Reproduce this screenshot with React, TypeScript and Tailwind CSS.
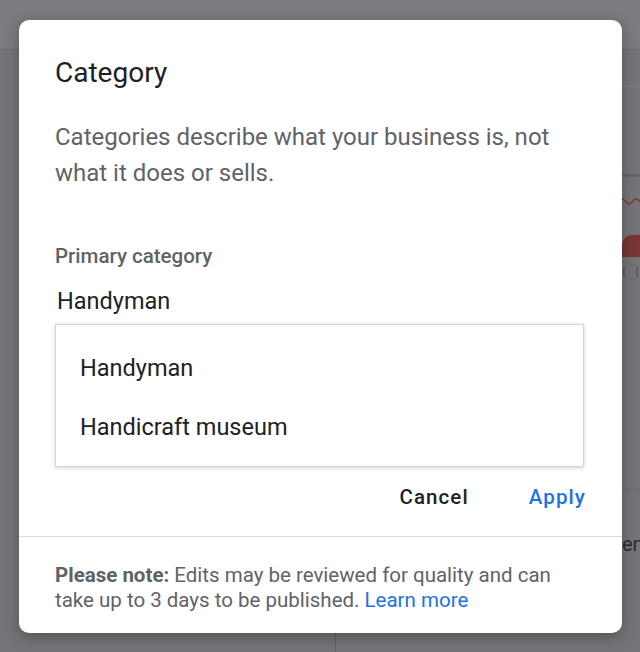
export default function App() {
  return (
    <div
      className="relative h-[652px] w-[640px] overflow-hidden bg-[#747578]"
      style={{ fontFamily: "Roboto, 'Liberation Sans', sans-serif" }}
    >
      {/* page behind the scrim */}
      <div className="absolute inset-0">
        <div className="h-[50px] border-b border-[#6c6d70] bg-[#7b7c7f]" />
        <div className="absolute left-[622px] top-[86px] h-px w-[18px] bg-[#7f8083]" />
        <div className="absolute left-[622px] top-[174px] h-[3px] w-[18px] bg-[#66676a]" />
        <svg className="absolute left-[622px] top-[196px]" width="18" height="10" viewBox="0 0 18 10">
          <path d="M0 3 C3 3 4 8 7 8 C10 8 11 3 14 3 C16 3 17 5 18 5" fill="none" stroke="#8a3030" strokeWidth="1.5" />
        </svg>
        <div className="absolute left-[622px] top-[235px] h-[22px] w-[18px] rounded-tl-[10px] bg-[#7a3535]" />
        <div className="absolute left-[623px] top-[267px] h-[10px] w-[2px] bg-[#5e5f62]" />
        <div className="absolute left-[636px] top-[267px] h-[10px] w-[2px] bg-[#5e5f62]" />
        <div className="absolute left-[622px] top-[489px] h-px w-[18px] bg-[#6a6b6e]" />
        <div className="absolute left-[622px] top-[529px] w-[18px] overflow-hidden whitespace-nowrap text-[20px] text-[#2b2c2e]">
          eni
        </div>
        <div className="absolute left-[335px] top-[633px] h-[19px] w-px bg-[#5f6063]" />
      </div>

      {/* dialog */}
      <div className="relative ml-[19px] mt-[20px] flex h-[613px] w-[603px] flex-col rounded-[10px] bg-white shadow-[0_4px_16px_rgba(0,0,0,0.3)]">
        <div className="flex flex-col px-[36px] pt-[37px]">
          <h2 className="text-[28px] leading-[32px] text-[#202124]">Category</h2>
          <p className="mt-[30px] w-[500px] text-[24px] leading-[36px] text-[#5f6368]">
            Categories describe what your business is, not what it does or sells.
          </p>
          <div className="mt-[53px] text-[20.5px] font-medium leading-[24px] text-[#5f6368]">Primary category</div>
          <div className="ml-[2px] mt-[19px] text-[23.5px] leading-[28px] text-[#202124]">Handyman</div>
          <div className="mt-[9px] flex w-[529px] flex-col border border-[#d6d6d6] bg-white pb-[9px] pt-[14px] shadow-[0_1px_4px_rgba(0,0,0,0.18)]">
            <div className="flex h-[59px] items-center px-[24px] text-[23.5px] text-[#202124]">Handyman</div>
            <div className="flex h-[59px] items-center px-[24px] text-[23.5px] text-[#202124]">Handicraft museum</div>
          </div>
          <div className="mt-[18px] flex justify-end gap-[60px]">
            <button className="text-[20.5px] font-medium leading-[24px] tracking-[1.1px] text-[#202124]">Cancel</button>
            <button className="text-[20.5px] font-medium leading-[24px] tracking-[1.1px] text-[#1a73e8]">Apply</button>
          </div>
        </div>
        <div className="mt-[27px] h-px bg-[#dadce0]" />
        <p className="px-[36px] pt-[26px] text-[20.5px] leading-[25px] text-[#5f6368]">
          <span className="font-bold">Please note:</span> Edits may be reviewed for quality and can take up to 3 days to
          be published. <span className="text-[#1a73e8]">Learn more</span>
        </p>
      </div>
    </div>
  );
}
